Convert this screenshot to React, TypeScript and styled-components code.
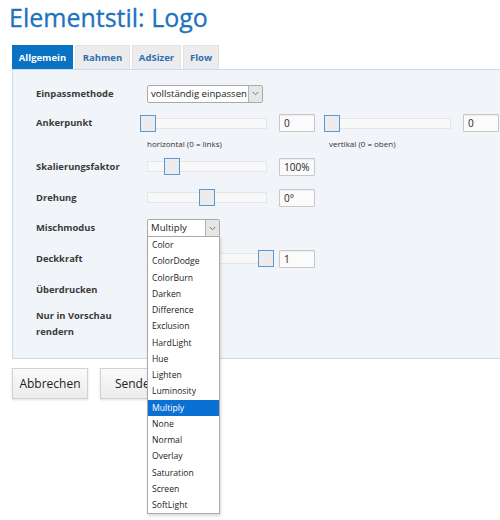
import React from "react";
import styled, { createGlobalStyle } from "styled-components";

const GlobalStyle = createGlobalStyle`
  html, body {
    margin: 0;
    padding: 0;
    background: #ffffff;
  }
  body {
    font-family: "Open Sans", "Liberation Sans", Arial, sans-serif;
    color: #333;
  }
`;

const Page = styled.div`
  width: 500px;
  height: 520px;
  padding-left: 12px;
  box-sizing: border-box;
  overflow: hidden;
`;

const Title = styled.h1`
  margin: 0 0 0 -3px;
  font-size: 25px;
  line-height: 34px;
  font-weight: 400;
  color: #1e72bd;
  -webkit-text-stroke: 0.3px #1e72bd;
`;

const Tabs = styled.div`
  display: flex;
  gap: 2px;
  margin-top: 11px;
  height: 24px;
`;

const Tab = styled.div<{ w: number; active?: boolean }>`
  display: flex;
  align-items: center;
  justify-content: center;
  width: ${(p) => p.w}px;
  font-size: 9.5px;
  font-weight: 700;
  background: ${(p) => (p.active ? "#0a72c3" : "#ececec")};
  color: ${(p) => (p.active ? "#ffffff" : "#2a6fb3")};
  border: 1px solid ${(p) => (p.active ? "#0a72c3" : "#e2e2e2")};
  border-bottom: none;
  box-sizing: border-box;
`;

const Panel = styled.div`
  background: #f1f4f8;
  border: 1px solid #c9dcee;
  border-right: none;
  padding: 8px 0 16px 23px;
  box-sizing: border-box;
`;

const Row = styled.div<{ h: number }>`
  display: flex;
  align-items: center;
  height: ${(p) => p.h}px;
`;

const Label = styled.div`
  width: 111px;
  flex: none;
  font-size: 9.4px;
  font-weight: 700;
  color: #3a3a3a;
  line-height: 16px;
`;

const Controls = styled.div`
  display: flex;
  align-items: center;
`;

const SubLabels = styled.div`
  display: flex;
  padding-left: 111px;
  height: 12px;
  align-items: center;
  font-size: 8px;
  color: #333;
`;

const SubLabel = styled.span<{ w: number }>`
  width: ${(p) => p.w}px;
`;

const Track = styled.div<{ after: number }>`
  position: relative;
  width: 120px;
  height: 11px;
  background: #f8f8f8;
  border: 1px solid #e6e6e6;
  box-sizing: border-box;
  margin-right: ${(p) => p.after}px;
`;

const Thumb = styled.div`
  position: absolute;
  top: -4px;
  width: 16px;
  height: 17px;
  margin-left: -8px;
  background: #ececec;
  border: 1.5px solid #5b98d3;
  box-sizing: border-box;
`;

const NumberBox = styled.div<{ after?: number }>`
  width: 36px;
  height: 18px;
  background: #fbfbfb;
  border: 1px solid #c8c8c8;
  border-radius: 1px;
  box-shadow: inset 0 1px 1px rgba(0, 0, 0, 0.06);
  box-sizing: border-box;
  padding-left: 4px;
  font-size: 10px;
  line-height: 16px;
  color: #222;
  margin-right: ${(p) => p.after ?? 0}px;
`;

const SelectBox = styled.div<{ w: number }>`
  position: relative;
  display: flex;
  width: ${(p) => p.w}px;
  height: 18px;
  background: #fff;
  border: 1px solid #a9a9a9;
  border-radius: 2px;
  box-sizing: border-box;
`;

const SelectText = styled.div`
  flex: 1;
  padding-left: 3px;
  font-size: 9.6px;
  line-height: 16px;
  color: #222;
  white-space: nowrap;
  overflow: hidden;
`;

const SelectArrow = styled.div`
  width: 13px;
  display: flex;
  align-items: center;
  justify-content: center;
  background: #e6e6e6;
  border-left: 1px solid #b5b5b5;
`;

const DropList = styled.div`
  position: absolute;
  top: 16px;
  left: -1px;
  width: 73px;
  background: #fff;
  border: 1px solid #a9a9a9;
  box-shadow: 1px 2px 3px rgba(0, 0, 0, 0.15);
  z-index: 10;
  box-sizing: border-box;
`;

const Option = styled.div<{ selected?: boolean }>`
  height: 16.25px;
  padding-left: 4px;
  font-size: 8.6px;
  line-height: 16px;
  background: ${(p) => (p.selected ? "#0b70d4" : "#fff")};
  color: ${(p) => (p.selected ? "#fff" : "#222")};
`;

const Buttons = styled.div`
  display: flex;
  gap: 12px;
  margin-top: 9px;
`;

const Button = styled.div<{ w: number }>`
  width: ${(p) => p.w}px;
  height: 31px;
  display: flex;
  align-items: center;
  justify-content: center;
  font-size: 12px;
  color: #222;
  background: linear-gradient(#fafafa, #ececec);
  border: 1px solid #d2d2d2;
  box-shadow: 0 1px 2px rgba(0, 0, 0, 0.12);
  box-sizing: border-box;
`;

const Chevron = () => (
  <svg width="7" height="5" viewBox="0 0 7 5">
    <path d="M0.8 1 L3.5 3.8 L6.2 1" fill="none" stroke="#777" strokeWidth="1" />
  </svg>
);

const Slider = ({ value, after }: { value: number; after: number }) => (
  <Track after={after}>
    <Thumb style={{ left: `${value * 100}%` }} />
  </Track>
);

const blendModes = [
  "Color",
  "ColorDodge",
  "ColorBurn",
  "Darken",
  "Difference",
  "Exclusion",
  "HardLight",
  "Hue",
  "Lighten",
  "Luminosity",
  "Multiply",
  "None",
  "Normal",
  "Overlay",
  "Saturation",
  "Screen",
  "SoftLight",
];

export default function App() {
  return (
    <Page>
      <GlobalStyle />
      <Title>Elementstil: Logo</Title>
      <Tabs>
        <Tab w={61} active>
          Allgemein
        </Tab>
        <Tab w={55}>Rahmen</Tab>
        <Tab w={49}>AdSizer</Tab>
        <Tab w={36}>Flow</Tab>
      </Tabs>
      <Panel>
        <Row h={31}>
          <Label>Einpassmethode</Label>
          <SelectBox w={116}>
            <SelectText>vollständig einpassen</SelectText>
            <SelectArrow>
              <Chevron />
            </SelectArrow>
          </SelectBox>
        </Row>
        <Row h={28}>
          <Label>Ankerpunkt</Label>
          <Controls>
            <Slider value={0} after={12} />
            <NumberBox after={16}>0</NumberBox>
            <Slider value={0} after={12} />
            <NumberBox>0</NumberBox>
          </Controls>
        </Row>
        <SubLabels>
          <SubLabel w={182}>horizontal (0 = links)</SubLabel>
          <SubLabel w={120}>vertikal (0 = oben)</SubLabel>
        </SubLabels>
        <Row h={31} style={{ marginTop: 2 }}>
          <Label>Skalierungsfaktor</Label>
          <Controls>
            <Slider value={0.2} after={12} />
            <NumberBox>100%</NumberBox>
          </Controls>
        </Row>
        <Row h={31}>
          <Label>Drehung</Label>
          <Controls>
            <Slider value={0.5} after={12} />
            <NumberBox>0°</NumberBox>
          </Controls>
        </Row>
        <Row h={30}>
          <Label>Mischmodus</Label>
          <SelectBox w={73}>
            <SelectText>Multiply</SelectText>
            <SelectArrow>
              <Chevron />
            </SelectArrow>
            <DropList>
              {blendModes.map((m) => (
                <Option key={m} selected={m === "Multiply"}>
                  {m}
                </Option>
              ))}
            </DropList>
          </SelectBox>
        </Row>
        <Row h={31}>
          <Label>Deckkraft</Label>
          <Controls>
            <Slider value={1} after={12} />
            <NumberBox>1</NumberBox>
          </Controls>
        </Row>
        <Row h={31}>
          <Label>Überdrucken</Label>
        </Row>
        <Row h={37}>
          <Label>
            Nur in Vorschau
            <br />
            rendern
          </Label>
        </Row>
      </Panel>
      <Buttons>
        <Button w={76}>Abbrechen</Button>
        <Button w={72}>Senden</Button>
      </Buttons>
    </Page>
  );
}
